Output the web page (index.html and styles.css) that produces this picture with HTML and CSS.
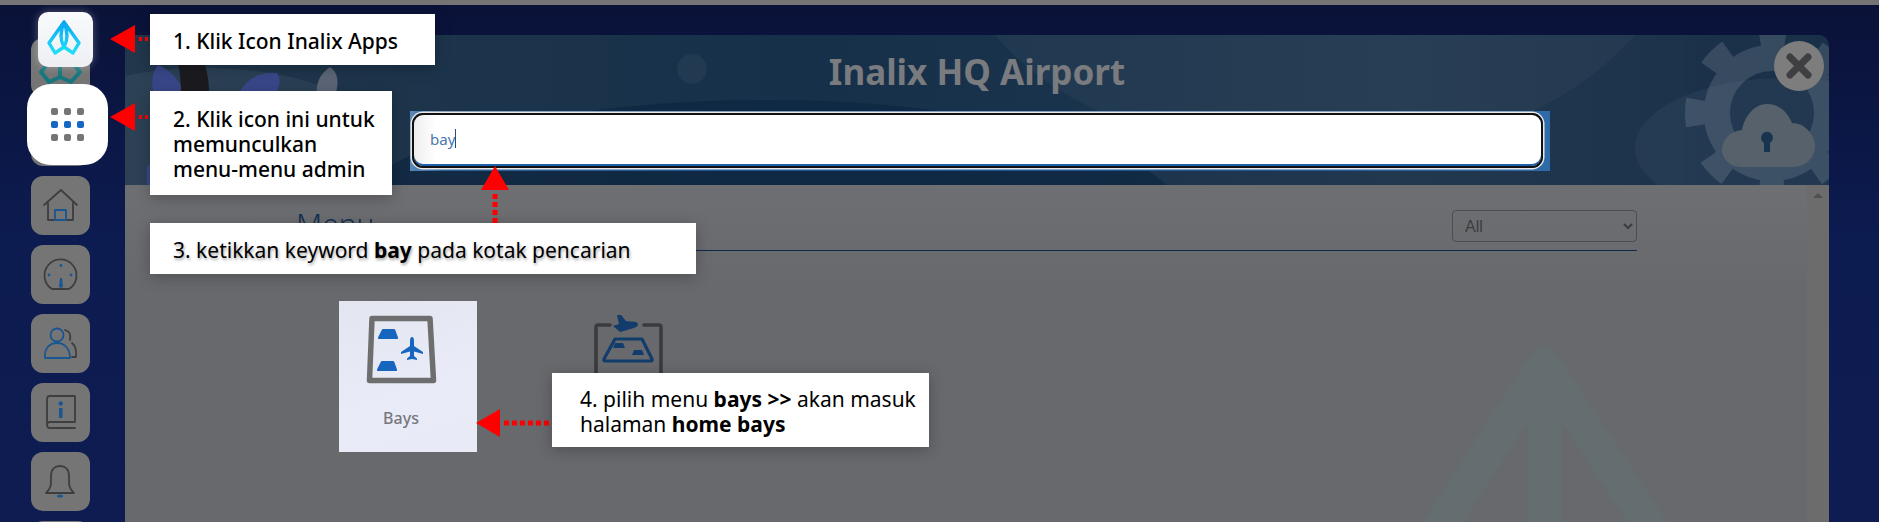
FILE: index.html
```html
<!DOCTYPE html>
<html lang="id">
<head>
<meta charset="utf-8">
<title>Inalix HQ Airport</title>
<link rel="stylesheet" href="styles.css">
</head>
<body>
<div class="page">
  <div class="topstrip"></div>
  <div class="stage">
    <nav class="sidebar">
      <div class="navbtn">
        <svg class="navicon" viewBox="0 0 59 59"><path class="teal" d="M29 10L10 34L18 44L29 39L40 44L49 34Z M29 10V39"/></svg>
      </div>
      <div class="navbtn"></div>
      <div class="navbtn">
        <svg class="navicon" viewBox="0 0 59 59"><path class="dk" d="M13 29L30 14L46 29M17 27V44H42V27"/><path class="bl" d="M24 34H35V44H24Z"/></svg>
      </div>
      <div class="navbtn">
        <svg class="navicon" viewBox="0 0 59 59"><path class="dk" d="M21 44A16 16 0 1 1 38 44Z"/><path class="blf" d="M29 33H31L31.8 40A2 2 0 1 1 28.2 40Z"/><circle class="blf" cx="18" cy="30" r="1.4"/><circle class="blf" cx="30" cy="20.5" r="1.4"/><circle class="blf" cx="40" cy="30" r="1.4"/></svg>
      </div>
      <div class="navbtn">
        <svg class="navicon" viewBox="0 0 59 59"><circle class="bl" cx="26" cy="21" r="6.5"/><path class="bl" d="M14 44C13 34 19 29 26 29C33 29 39 34 39 44Z"/><path class="dk" d="M34 16Q41 18 39 26M41 29Q46 33 45 43H41"/></svg>
      </div>
      <div class="navbtn">
        <svg class="navicon" viewBox="0 0 59 59"><path class="dk" d="M16 41V16A3 3 0 0 1 19 13H44V39H19A3 3 0 0 0 19 45H44"/><rect class="blf" x="28" y="25" width="3.5" height="10"/><circle class="blf" cx="29.7" cy="20.5" r="2.2"/></svg>
      </div>
      <div class="navbtn">
        <svg class="navicon" viewBox="0 0 59 59"><path class="dk" d="M15 41C21 36 20 30 20 24C20 17 24 14 29 14C34 14 38 17 38 24C38 30 37 36 43 41Z"/><ellipse class="blf" cx="29" cy="44" rx="3" ry="1.6"/></svg>
      </div>
      <div class="navbtn"></div>
    </nav>

    <main class="modal">
      <header class="mhead">
        <svg class="headart" viewBox="0 0 1704 150" preserveAspectRatio="none">
          <ellipse class="hl" cx="80" cy="95" rx="165" ry="62"/>
          <path class="hd" d="M33 30C48 36 54 46 58 56H28C26 46 28 36 33 30Z"/>
          <path class="hair" d="M52 25H78C82 34 84 46 84 58H56C56 46 55 34 52 25Z"/>
          <path class="hd" d="M115 56C122 44 135 36 152 38C156 44 155 50 152 56Z"/>
          <path class="lf" d="M205 32C214 38 214 50 210 60H192C190 48 196 38 205 32Z"/>
          <path class="hd" d="M22 130H30V150H22Z"/>
          <ellipse class="dark" cx="640" cy="185" rx="420" ry="120"/>
          <circle class="hs" cx="567" cy="34" r="15"/>
          <ellipse class="hs" cx="1660" cy="113" rx="150" ry="70"/>
          <path class="hl2" d="M870 0H1510Q1430 90 1290 110Q1150 128 1010 90Q920 60 870 0Z"/>
          <g class="gear">
            <circle cx="1647" cy="78" r="55" />
            <circle class="teeth" cx="1647" cy="78" r="76"/>
          </g>
          <path class="cloud" d="M1617 132C1603 132 1597 122 1597 115C1597 104 1606 96 1617 95C1620 80 1630 69 1642 69C1655 69 1663 78 1667 88C1680 88 1690 100 1690 111C1690 123 1680 132 1668 132Z"/>
          <path class="keyhole" d="M1639 108A6 6 0 1 1 1645 108V117H1639Z"/>
        </svg>
        <h1 class="title">Inalix HQ Airport</h1>
        <div class="searchwrap">
          <div class="searchinput"><span class="typed">bay</span><span class="caret"></span></div>
        </div>
        <button class="close" aria-label="Tutup">
          <svg viewBox="0 0 50 50"><path d="M16 16L34 34M34 16L16 34"/></svg>
        </button>
      </header>
      <div class="mbody">
        <svg class="watermark" viewBox="0 0 1704 337" preserveAspectRatio="none"><path d="M1298 337L1400 177Q1419 147 1438 177L1542 337H1502L1437 237V337H1403V237L1338 337Z"/></svg>
        <section class="content">
          <div class="menuhead">
            <h2 class="menutitle">Menu</h2>
            <select class="filter"><option>All</option></select>
          </div>
          <div class="cards">
            <article class="card active">
              <svg class="cardicon" viewBox="0 0 80 80">
                <path class="frame" d="M11 7.5H69L72.5 69.5H8.5Z"/>
                <path class="fillb" d="M21 18.5Q21.5 18 22 18H33Q34 18 34.3 19L37 26.5Q37.5 28 36 28H18Q16.5 28 17 26.5Z"/>
                <path class="fillb" d="M20 50.5Q20.5 50 21 50H32Q33 50 33.3 51L36 58.5Q36.5 60 35 60H17Q15.5 60 16 58.5Z"/>
                <path class="fillb" d="M51 26C52.5 26 53 28 53 30V35L62 41V43L53 40.5V45L56 47.5V49L51 48L46 49V47.5L49 45V40.5L40 43V41L49 35V30C49 28 49.5 26 51 26Z"/>
              </svg>
              <span class="cardlabel">Bays</span>
            </article>
            <article class="card">
              <svg class="cardicon" viewBox="0 0 80 80">
                <path class="frame2" d="M22 14H10Q8 14 8 16V78Q8 80 10 80H71Q73 80 73 78V16Q73 14 71 14H56"/>
                <path class="navy" d="M29 4L33 4L38 10L48 11Q53 14 46 17L32 21L25 15L31 13Z"/>
                <path class="tray" d="M27 28H54L64 48Q65 50 62 50H18Q15 50 16 48Z"/>
                <path class="navy" d="M27 32H35L37 37H25Z M46 39H54L56 44H44Z"/>
              </svg>
            </article>
          </div>
        </section>
        <aside class="scroll"><span class="scrollup"></span></aside>
      </div>
    </main>
  </div>

  <div class="tile-logo">
    <svg viewBox="0 0 55 55">
      <defs><linearGradient id="kite" x1="0" y1="0" x2="0" y2="1"><stop offset="0" stop-color="#0ba5f5"/><stop offset="1" stop-color="#1fe0f8"/></linearGradient></defs>
      <path d="M26 10L11 31L17 41L26 35L35 41L41 31Z M26 10C22 20 22 28 26 35C30 28 30 20 26 10Z"/>
    </svg>
  </div>
  <div class="tile-grid">
    <div class="dots"><i></i><i></i><i></i><i class="on"></i><i class="on"></i><i class="on"></i><i></i><i></i><i></i></div>
  </div>

  <svg class="arrows" viewBox="0 0 1879 522">
    <path d="M110 39L135 25V53Z"/><path class="dash short" d="M139 39H150"/>
    <path d="M110 117L135 103V131Z"/><path class="dash short" d="M139 117H150"/>
    <path d="M495 166L481 190H509Z"/><path class="dash" d="M495 194V223"/>
    <path d="M476 423L500 409V437Z"/><path class="dash" d="M504 423H552"/>
  </svg>

  <div class="note note1 strong"><span>1. Klik Icon Inalix Apps</span></div>
  <div class="note note2 strong"><span>2. Klik icon ini untuk<br>memunculkan<br>menu-menu admin</span></div>
  <div class="note note3 shadowed"><span>3. ketikkan keyword <b>bay</b> pada kotak pencarian</span></div>
  <div class="note note4"><span>4. pilih menu <b>bays &gt;&gt;</b> akan masuk<br>halaman <b>home bays</b></span></div>
</div>
</body>
</html>
```
FILE: styles.css
```css
* { box-sizing: border-box; }
html, body { margin: 0; height: 100%; }
body { font-family: "Noto Sans", sans-serif; background: #0d1a50; overflow: hidden; }
.page { position: relative; width: 1879px; height: 522px; overflow: hidden; display: flex; flex-direction: column; }
.topstrip { height: 5px; background: #757575; flex: none; }
.stage { flex: 1; display: flex; min-height: 0; background: linear-gradient(180deg, #0a1238 0%, #0c1b50 45%, #0e1c52 100%); }

.sidebar { width: 125px; flex: none; padding: 33px 0 0 31px; display: flex; flex-direction: column; gap: 10px; overflow: hidden; }
.navbtn { width: 59px; height: 59px; flex: none; border-radius: 12px; background: #757575; }
.navicon { display: block; width: 59px; height: 59px; }
.navicon path, .navicon circle, .navicon ellipse { fill: none; stroke-width: 1.8; stroke-linejoin: round; stroke-linecap: round; }
.navicon .dk { stroke: #3e3e40; }
.navicon .bl { stroke: #1a568f; }
.navicon .blf { fill: #1a568f; stroke: none; }
.navicon .teal { stroke: #17767d; stroke-width: 4; }

.modal { width: 1704px; flex: none; margin-top: 30px; display: flex; flex-direction: column; border-radius: 10px 10px 0 0; overflow: hidden; }
.mhead { position: relative; height: 150px; flex: none; overflow: hidden; padding-top: 15px; background: linear-gradient(90deg, #22374c 0%, #1c344b 20%, #16304a 40%, #1a334c 55%, #21384f 75%, #1a3049 100%); }
.headart { position: absolute; inset: 0; width: 100%; height: 100%; }
.hl { fill: rgba(255,255,255,.05); }
.hs { fill: rgba(255,255,255,.04); }
.hl2 { fill: rgba(255,255,255,.03); }
.hd { fill: #39478a; }
.hair { fill: #1b1b20; }
.lf { fill: #5b6576; }
.dark { fill: rgba(8,32,60,.5); }
.gear { opacity: .12; }
.gear circle { fill: none; stroke: #fff; stroke-width: 26; }
.gear .teeth { stroke-width: 22; stroke-dasharray: 26 33.7; stroke-dashoffset: 13; }
.cloud { fill: #56616b; }
.keyhole { fill: #19344f; }
.title { position: relative; margin: 0; text-align: center; font-size: 35px; line-height: 44px; font-weight: 700; color: #7a7b7e; }
.searchwrap { position: relative; margin: 17px 0 0 285px; width: 1140px; height: 60px; padding: 2px 7px 3px 2px; background: linear-gradient(90deg, #5d88b5 0%, #2f6199 3%, #1d5596 30%, #1d5596 70%, #2f6ba8 100%); }
.searchinput { height: 55px; display: flex; align-items: center; padding-left: 16px; padding-bottom: 4px; background: linear-gradient(90deg, #eee 0%, #fff 2%); border: 2px solid #111; border-radius: 11px; box-shadow: 0 0 0 1.5px #e8e8e8, inset 0 -2px 0 #1d5fa8; }
.typed { font-size: 15px; color: #4a78ae; }
.caret { width: 1px; height: 19px; background: #1d4f86; }
.close { position: absolute; right: 5px; top: 6px; width: 50px; height: 50px; padding: 0; border: 0; border-radius: 50%; background: #7d7d7d; }
.close svg { display: block; width: 50px; height: 50px; }
.close path { fill: none; stroke: #3f3f41; stroke-width: 7; stroke-linecap: round; }

.mbody { position: relative; flex: 1; display: flex; min-height: 0; overflow: hidden; background: linear-gradient(180deg, #6e6f72 0%, #68696d 30%, #68696d 100%); }
.watermark { position: absolute; left: 0; top: 0; width: 1704px; height: 337px; }
.watermark path { fill: #646d6f; }
.content { position: relative; flex: 1; padding: 25px 170px 0 171px; }
.menuhead { height: 41px; display: flex; justify-content: space-between; border-bottom: 1px solid #0d2a4a; padding-bottom: 8px; align-items: flex-start; }
.menutitle { margin: -6px 0 0; font-size: 30px; font-weight: 300; line-height: 40px; color: #14304f; }
.filter { width: 185px; height: 32px; padding-left: 8px; background: transparent; border: 1px solid #4d4d4f; border-radius: 4px; color: #3d3d3f; font: 16px "Liberation Sans", sans-serif; }
.cards { display: flex; gap: 89px; margin: 50px 0 0 43px; }
.card { width: 138px; height: 151px; padding: 10px 14px 0 0; display: flex; flex-direction: column; align-items: center; }
.card.active { background: linear-gradient(160deg, #e3e6f0 0%, #e9ecf8 60%, #e8ebf6 100%); }
.cardicon { display: block; width: 80px; height: 80px; flex: none; overflow: visible; }
.frame { fill: none; stroke: #6e6e6e; stroke-width: 5.5; stroke-linejoin: round; }
.frame2 { fill: none; stroke: #3a3b3e; stroke-width: 3.6; stroke-linecap: round; }
.fillb { fill: #1666c0; }
.navy { fill: #123c6b; }
.tray { fill: none; stroke: #123c6b; stroke-width: 3.2; stroke-linejoin: round; }
.cardlabel { margin-top: 17px; font-size: 16px; line-height: 20px; font-weight: 500; color: #76777b; }
.scroll { position: relative; width: 22px; flex: none; background: #6c6c6c; padding: 8px 0 0 6px; }
.scrollup { display: block; width: 0; height: 0; border-left: 5px solid transparent; border-right: 5px solid transparent; border-bottom: 5px solid #505052; }

.tile-logo { position: absolute; left: 38px; top: 12px; width: 55px; height: 55px; border-radius: 10px; background: linear-gradient(180deg, #f9fafc, #edeff2); box-shadow: 0 0 8px rgba(255,255,255,.3); }
.tile-logo svg { display: block; width: 55px; height: 55px; }
.tile-logo path { fill: none; stroke: url(#kite); stroke-width: 3.4; stroke-linejoin: round; }
.tile-grid { position: absolute; left: 27px; top: 84px; width: 81px; height: 81px; border-radius: 24px; background: #fff; display: flex; align-items: center; justify-content: center; }
.dots { display: grid; grid-template-columns: repeat(3, 7px); grid-auto-rows: 7px; gap: 6px; }
.dots i { border-radius: 2px; background: #757575; }
.dots i.on { background: #1467c3; }

.arrows { position: absolute; left: 0; top: 0; width: 1879px; height: 522px; pointer-events: none; }
.arrows path { fill: #ff0000; }
.arrows .dash { fill: none; stroke: #ff0000; stroke-width: 5; stroke-dasharray: 5 3; }
.arrows .short { stroke-dasharray: 3 3; stroke-width: 4; }

.note { position: absolute; background: #fff; color: #000; font-size: 21px; line-height: 25px; white-space: nowrap; display: flex; align-items: center; padding-left: 23px; padding-top: 3px; box-shadow: 0 3px 14px rgba(0,0,0,.25); }
.strong { font-weight: 500; }
.note b { font-weight: 700; }
.note1 { left: 150px; top: 14px; width: 285px; height: 51px; }
.note2 { left: 150px; top: 91px; width: 242px; height: 104px; }
.note3 { left: 150px; top: 223px; width: 546px; height: 51px; }
.note4 { left: 552px; top: 373px; width: 377px; height: 74px; padding-left: 28px; }
.shadowed { text-shadow: 1px 2px 3px rgba(0,0,0,.35); }
```
